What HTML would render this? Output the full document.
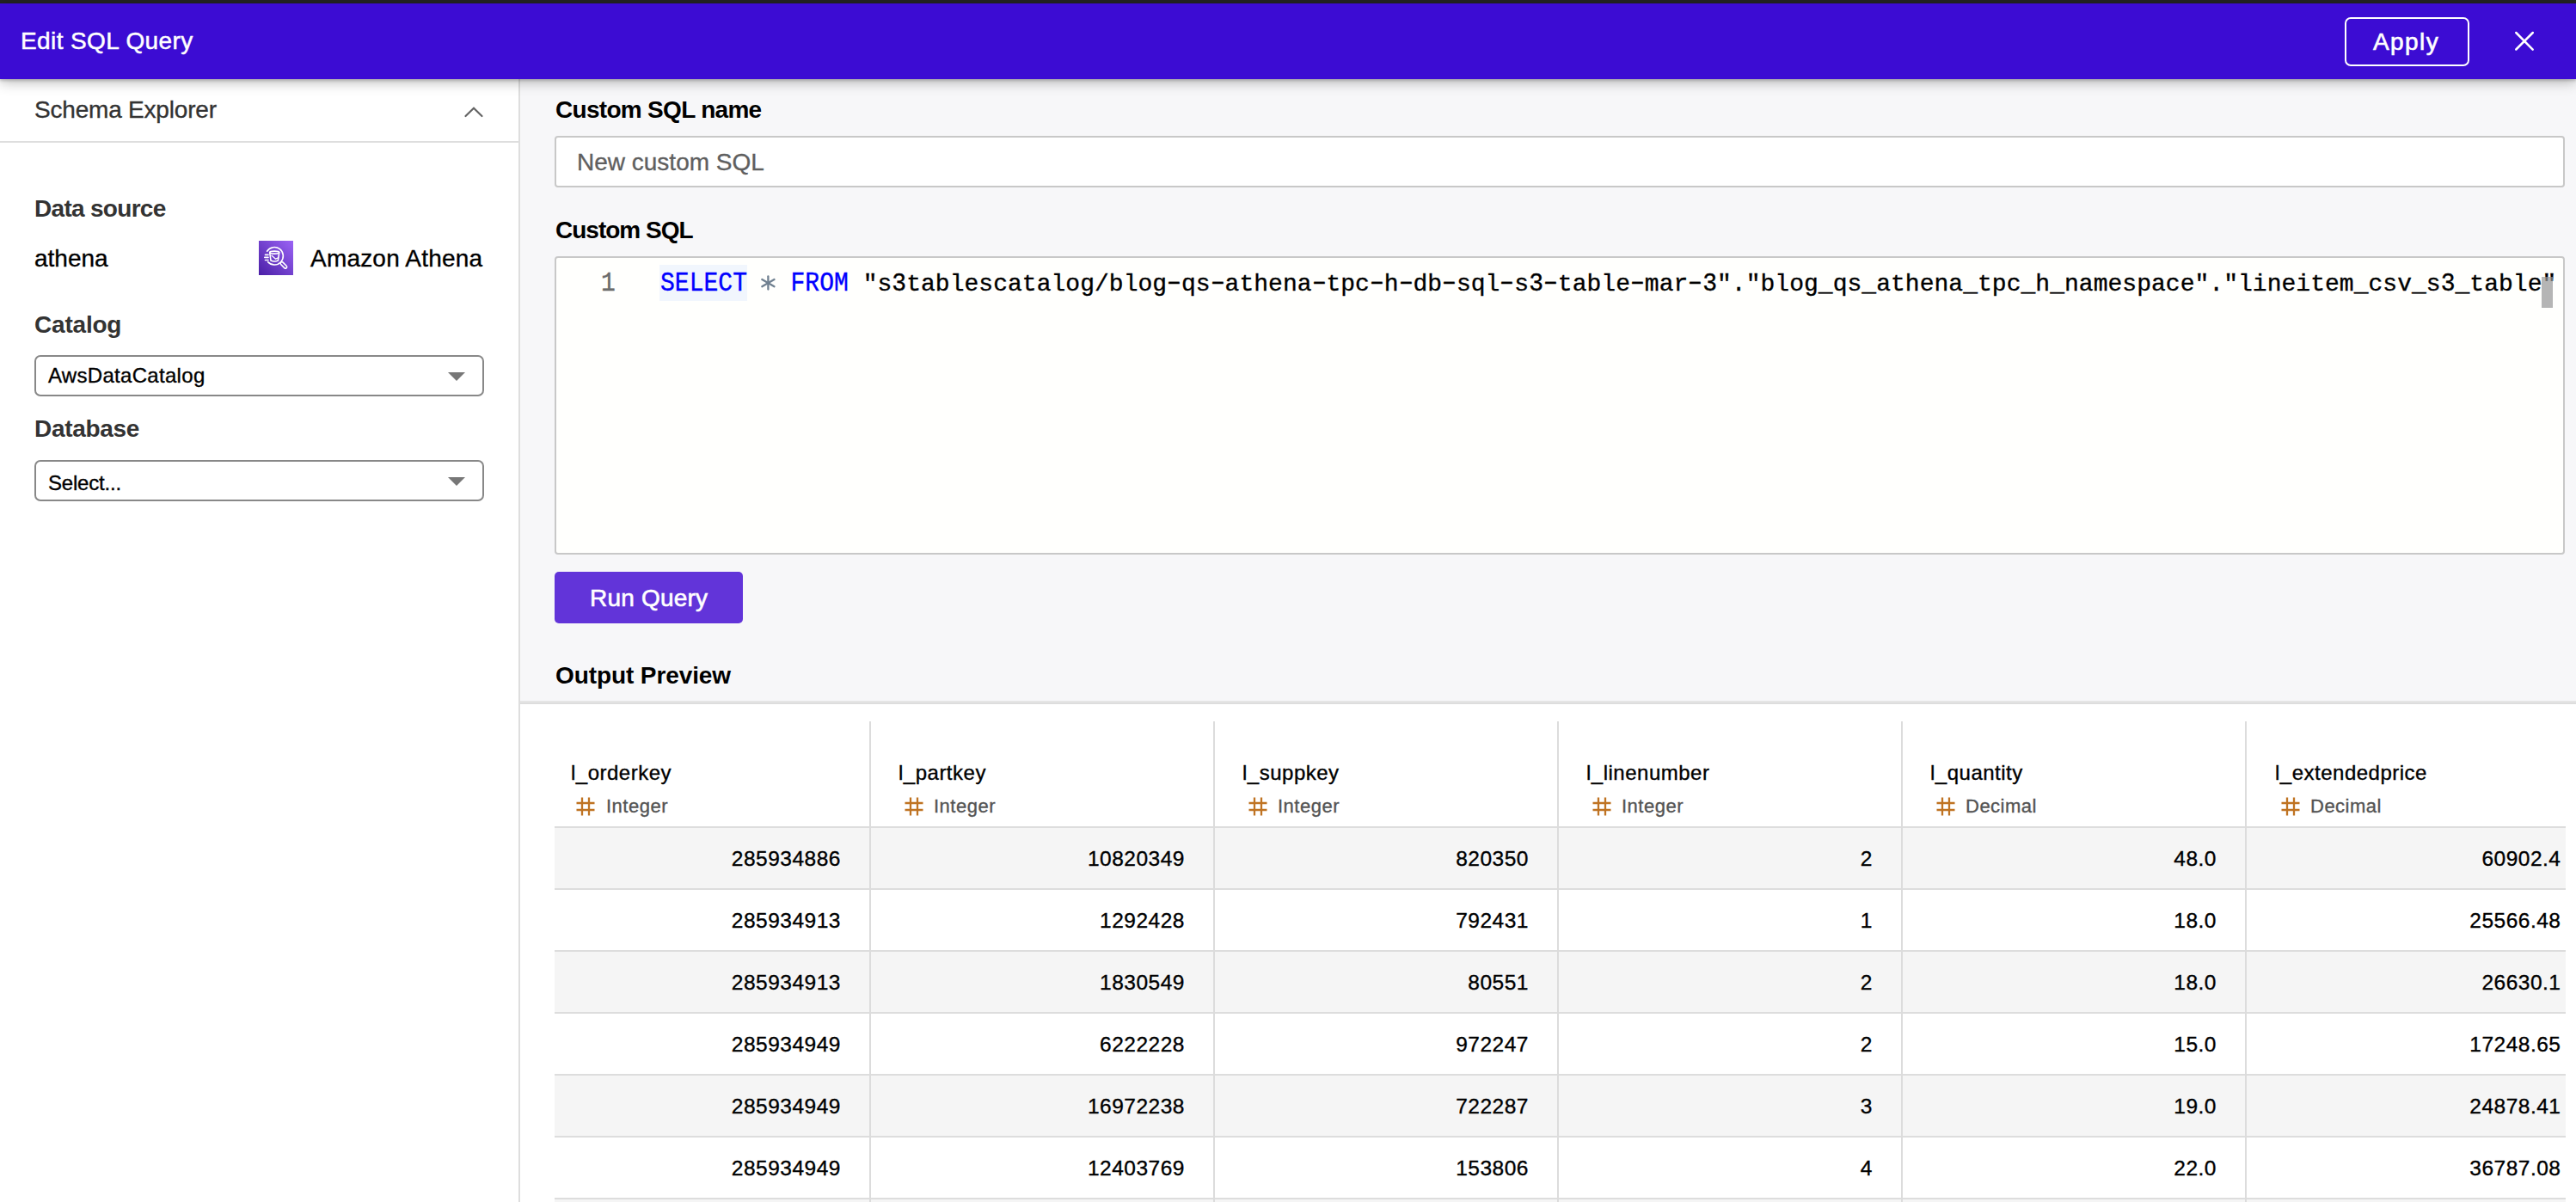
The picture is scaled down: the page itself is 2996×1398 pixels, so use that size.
<!DOCTYPE html>
<html><head><meta charset="utf-8">
<style>
*{box-sizing:border-box;margin:0;padding:0}
html,body{width:2996px;height:1398px;overflow:hidden;background:#fff;font-family:"Liberation Sans",sans-serif}
.a{position:absolute;white-space:nowrap}
.t{position:absolute;white-space:nowrap;line-height:0;-webkit-text-stroke:0.35px currentColor}
#topbar{left:0;top:0;width:2996px;height:4px;background:#232323}
#hdr{left:0;top:4px;width:2996px;height:88px;background:#3c0cd3;z-index:5;box-shadow:0 2px 3px rgba(0,0,0,0.18),0 4px 14px rgba(0,0,0,0.26)}
#left{left:0;top:92px;width:603px;height:1306px;background:#fff}
#lborder{left:603px;top:92px;width:2px;height:1306px;background:#dedede}
#right{left:605px;top:92px;width:2391px;height:726px;background:#f7f7f9}
.lbl{font-size:28px;font-weight:bold;color:#000;letter-spacing:-0.7px;-webkit-text-stroke:0}
.sel{position:absolute;left:40px;width:523px;height:48px;border:2px solid #888;border-radius:7px;background:#fff}
.tri{position:absolute;width:0;height:0;border-left:10px solid transparent;border-right:10px solid transparent;border-top:10px solid #777}
.box{position:absolute;border:2px solid #c8c8c8;border-radius:4px;background:#fff}
.mono{font-family:"Liberation Mono",monospace;white-space:pre}
.mono b{font-weight:normal;display:inline-block;line-height:0}
.mono .up{transform:scaleY(1.15);transform-origin:0 7.45px}
.mono .dg{transform:scaleY(1.08);transform-origin:0 7.45px}
.mono .hy{transform:translateY(-2.2px) scaleX(1.6);transform-origin:50% 0}
.hn{font-size:24px;color:#000;letter-spacing:0.5px}
.ty{font-size:22px;color:#545454;letter-spacing:0.5px}
.num{font-size:24.5px;color:#000;letter-spacing:0.5px}
.row{position:absolute;left:645px;width:2339px;height:72px}
.rb{position:absolute;left:645px;width:2339px;height:2px;background:#dddddd}
.cd{position:absolute;width:2px;background:#dcdcdc}
</style></head><body>
<div class="a" id="topbar"></div>
<div class="a" id="hdr">
  <div class="t" style="left:24px;top:44px;font-size:28px;color:#fff;letter-spacing:0.4px;-webkit-text-stroke:0.5px #fff">Edit SQL Query</div>
  <div class="a" style="left:2727px;top:16px;width:145px;height:57px;border:2px solid #fff;border-radius:7px"></div>
  <div class="t" style="left:2760px;top:45px;font-size:28px;color:#fff;letter-spacing:1.4px;-webkit-text-stroke:0.6px #fff">Apply</div>
  <svg class="a" style="left:2922px;top:26px" width="30" height="34" viewBox="0 0 30 34"><path d="M4.3 8 L23.7 27.6 M23.8 8 L4.3 27.5" stroke="#fff" stroke-width="2.5" stroke-linecap="round"/></svg>
</div>

<div class="a" id="left"></div>
<div class="a" id="lborder"></div>
<div class="a" id="right"></div>

<!-- left panel -->
<div class="t" style="left:40px;top:128px;font-size:28px;color:#333;letter-spacing:-0.2px">Schema Explorer</div>
<svg class="a" style="left:538px;top:121px" width="26" height="18" viewBox="0 0 26 18"><path d="M3.5 14 L13 4.8 L22.5 14" stroke="#636363" stroke-width="2.2" fill="none" stroke-linecap="round"/></svg>
<div class="a" style="left:0;top:164px;width:603px;height:2px;background:#dedede"></div>

<div class="t lbl" style="left:40px;top:243px;color:#333">Data source</div>
<div class="t" style="left:40px;top:301px;font-size:28px;color:#000">athena</div>
<svg class="a" style="left:301px;top:280px" width="40" height="40" viewBox="0 0 40 40">
  <defs><linearGradient id="ag" x1="0" y1="1" x2="1" y2="0"><stop offset="0" stop-color="#4a1fa6"/><stop offset="1" stop-color="#9b63f5"/></linearGradient></defs>
  <rect width="40" height="40" fill="url(#ag)"/>
  <g fill="none" stroke="#fff" stroke-width="1.6" stroke-linecap="round">
    <path d="M9.6 12.2 A10.2 10.2 0 1 1 10.6 24.6"/>
    <rect x="-1.7" y="-4.6" width="3.4" height="9.2" rx="1.7" transform="translate(28.9 28.4) rotate(-45)"/>
    <path d="M7.5 16.4 H11 M6.8 19.4 H11 M7.5 22.5 H11"/>
    <ellipse cx="18.2" cy="13.6" rx="5.5" ry="1.5"/>
    <path d="M12.7 13.6 L14 23 Q18.2 25 22.4 23 L23.7 13.6"/>
  </g>
  <path d="M14.6 16.8 L19.5 21.2 L23.2 19.5" fill="none" stroke="#fff" stroke-width="1.3"/>
</svg>
<div class="t" style="left:361px;top:301px;font-size:28px;color:#000;letter-spacing:0.2px">Amazon Athena</div>

<div class="t lbl" style="left:40px;top:378px;color:#333;letter-spacing:-0.2px">Catalog</div>
<div class="sel" style="top:413px"></div>
<div class="t" style="left:56px;top:437px;font-size:24px;color:#000;letter-spacing:0.3px">AwsDataCatalog</div>
<div class="tri" style="left:521px;top:433px"></div>

<div class="t lbl" style="left:40px;top:499px;color:#333;letter-spacing:-0.3px">Database</div>
<div class="sel" style="top:535px"></div>
<div class="t" style="left:56px;top:562px;font-size:24px;color:#000;letter-spacing:-0.2px">Select...</div>
<div class="tri" style="left:521px;top:555px"></div>

<!-- right panel -->
<div class="t lbl" style="left:646px;top:128px">Custom SQL name</div>
<div class="box" style="left:645px;top:158px;width:2338px;height:60px"></div>
<div class="t" style="left:671px;top:189px;font-size:28px;color:#5f5f5f">New custom SQL</div>

<div class="t lbl" style="left:646px;top:268px;letter-spacing:-1px">Custom SQL</div>
<div class="box" style="left:645px;top:298px;width:2338px;height:347px;background:#fffffd"></div>
<div class="a" style="left:767px;top:308px;width:102px;height:42px;background:#f1f6fd"></div>
<div class="t mono" style="left:699px;top:331px;font-size:28px;color:#6b6b6b;transform:scaleY(1.15);transform-origin:0 7.45px">1</div>
<svg class="a" style="left:883px;top:319px" width="20" height="20" viewBox="0 0 20 20"><g stroke="#708090" stroke-width="2.3" stroke-linecap="round"><path d="M10.4 2.5 V17.5"/><path d="M3.3 6 L17.5 14.2"/><path d="M3.3 14.2 L17.5 6"/></g></svg>
<div class="t mono" style="left:768px;top:331px;font-size:28px;color:#000;letter-spacing:0.03px"><b class="up" style="color:#0000ff">SELECT</b>   <b class="up" style="color:#0000ff">FROM</b> "s<b class="dg">3</b>tablescatalog/blog<b class="hy">-</b>qs<b class="hy">-</b>athena<b class="hy">-</b>tpc<b class="hy">-</b>h<b class="hy">-</b>db<b class="hy">-</b>sql<b class="hy">-</b>s<b class="dg">3</b><b class="hy">-</b>table<b class="hy">-</b>mar<b class="hy">-</b><b class="dg">3</b>"."blog_qs_athena_tpc_h_namespace"."lineitem_csv_s<b class="dg">3</b>_table"</div>
<div class="a" style="left:2956px;top:322px;width:13px;height:36px;background:rgba(150,150,150,0.7)"></div>

<div class="a" style="left:645px;top:665px;width:219px;height:60px;background:#6234d9;border-radius:5px"></div>
<div class="t" style="left:686px;top:696px;font-size:28px;color:#fff;-webkit-text-stroke:0.6px #fff;letter-spacing:0.2px">Run Query</div>

<div class="t lbl" style="left:646px;top:786px;letter-spacing:-0.1px">Output Preview</div>
<div class="a" style="left:605px;top:815px;width:2391px;height:4px;background:linear-gradient(#e5e5e5 50%,#dddddd 50%)"></div>

<!-- table -->
<!--TBL-->
<div class="row" style="top:962.00px;background:#f5f5f5"></div>
<div class="rb" style="top:961.00px"></div>
<div class="row" style="top:1034.05px;background:#fff"></div>
<div class="rb" style="top:1033.05px"></div>
<div class="row" style="top:1106.10px;background:#f5f5f5"></div>
<div class="rb" style="top:1105.10px"></div>
<div class="row" style="top:1178.15px;background:#fff"></div>
<div class="rb" style="top:1177.15px"></div>
<div class="row" style="top:1250.20px;background:#f5f5f5"></div>
<div class="rb" style="top:1249.20px"></div>
<div class="row" style="top:1322.25px;background:#fff"></div>
<div class="rb" style="top:1321.25px"></div>
<div class="row" style="top:1394.30px;background:#f5f5f5"></div>
<div class="rb" style="top:1393.30px"></div>
<div class="cd" style="left:1011px;top:839px;height:600px"></div>
<div class="cd" style="left:1411px;top:839px;height:600px"></div>
<div class="cd" style="left:1811px;top:839px;height:600px"></div>
<div class="cd" style="left:2211px;top:839px;height:600px"></div>
<div class="cd" style="left:2611px;top:839px;height:600px"></div>
<div class="t hn" style="left:664px;top:899.18px">l_orderkey</div>
<svg class="a" style="left:670px;top:927px" width="22" height="22" viewBox="0 0 22 22"><path d="M7 0.5 V21.5 M15 0.5 V21.5 M0.5 7 H21.5 M0.5 15 H21.5" stroke="#bf7322" stroke-width="2.3"/></svg>
<div class="t ty" style="left:705px;top:938.08px">Integer</div>
<div class="t hn" style="left:1045px;top:899.18px">l_partkey</div>
<svg class="a" style="left:1052.3px;top:927px" width="22" height="22" viewBox="0 0 22 22"><path d="M7 0.5 V21.5 M15 0.5 V21.5 M0.5 7 H21.5 M0.5 15 H21.5" stroke="#bf7322" stroke-width="2.3"/></svg>
<div class="t ty" style="left:1086px;top:938.08px">Integer</div>
<div class="t hn" style="left:1445px;top:899.18px">l_suppkey</div>
<svg class="a" style="left:1452.3px;top:927px" width="22" height="22" viewBox="0 0 22 22"><path d="M7 0.5 V21.5 M15 0.5 V21.5 M0.5 7 H21.5 M0.5 15 H21.5" stroke="#bf7322" stroke-width="2.3"/></svg>
<div class="t ty" style="left:1486px;top:938.08px">Integer</div>
<div class="t hn" style="left:1845px;top:899.18px">l_linenumber</div>
<svg class="a" style="left:1852.3px;top:927px" width="22" height="22" viewBox="0 0 22 22"><path d="M7 0.5 V21.5 M15 0.5 V21.5 M0.5 7 H21.5 M0.5 15 H21.5" stroke="#bf7322" stroke-width="2.3"/></svg>
<div class="t ty" style="left:1886px;top:938.08px">Integer</div>
<div class="t hn" style="left:2245px;top:899.18px">l_quantity</div>
<svg class="a" style="left:2252.3px;top:927px" width="22" height="22" viewBox="0 0 22 22"><path d="M7 0.5 V21.5 M15 0.5 V21.5 M0.5 7 H21.5 M0.5 15 H21.5" stroke="#bf7322" stroke-width="2.3"/></svg>
<div class="t ty" style="left:2286px;top:938.08px">Decimal</div>
<div class="t hn" style="left:2646px;top:899.18px">l_extendedprice</div>
<svg class="a" style="left:2653.3px;top:927px" width="22" height="22" viewBox="0 0 22 22"><path d="M7 0.5 V21.5 M15 0.5 V21.5 M0.5 7 H21.5 M0.5 15 H21.5" stroke="#bf7322" stroke-width="2.3"/></svg>
<div class="t ty" style="left:2687px;top:938.08px">Decimal</div>
<div class="t num" style="right:2018px;top:998.51px">285934886</div>
<div class="t num" style="right:1618px;top:998.51px">10820349</div>
<div class="t num" style="right:1218px;top:998.51px">820350</div>
<div class="t num" style="right:818px;top:998.51px">2</div>
<div class="t num" style="right:418px;top:998.51px">48.0</div>
<div class="t num" style="right:17.5px;top:998.51px">60902.4</div>
<div class="t num" style="right:2018px;top:1070.56px">285934913</div>
<div class="t num" style="right:1618px;top:1070.56px">1292428</div>
<div class="t num" style="right:1218px;top:1070.56px">792431</div>
<div class="t num" style="right:818px;top:1070.56px">1</div>
<div class="t num" style="right:418px;top:1070.56px">18.0</div>
<div class="t num" style="right:17.5px;top:1070.56px">25566.48</div>
<div class="t num" style="right:2018px;top:1142.61px">285934913</div>
<div class="t num" style="right:1618px;top:1142.61px">1830549</div>
<div class="t num" style="right:1218px;top:1142.61px">80551</div>
<div class="t num" style="right:818px;top:1142.61px">2</div>
<div class="t num" style="right:418px;top:1142.61px">18.0</div>
<div class="t num" style="right:17.5px;top:1142.61px">26630.1</div>
<div class="t num" style="right:2018px;top:1214.66px">285934949</div>
<div class="t num" style="right:1618px;top:1214.66px">6222228</div>
<div class="t num" style="right:1218px;top:1214.66px">972247</div>
<div class="t num" style="right:818px;top:1214.66px">2</div>
<div class="t num" style="right:418px;top:1214.66px">15.0</div>
<div class="t num" style="right:17.5px;top:1214.66px">17248.65</div>
<div class="t num" style="right:2018px;top:1286.71px">285934949</div>
<div class="t num" style="right:1618px;top:1286.71px">16972238</div>
<div class="t num" style="right:1218px;top:1286.71px">722287</div>
<div class="t num" style="right:818px;top:1286.71px">3</div>
<div class="t num" style="right:418px;top:1286.71px">19.0</div>
<div class="t num" style="right:17.5px;top:1286.71px">24878.41</div>
<div class="t num" style="right:2018px;top:1358.76px">285934949</div>
<div class="t num" style="right:1618px;top:1358.76px">12403769</div>
<div class="t num" style="right:1218px;top:1358.76px">153806</div>
<div class="t num" style="right:818px;top:1358.76px">4</div>
<div class="t num" style="right:418px;top:1358.76px">22.0</div>
<div class="t num" style="right:17.5px;top:1358.76px">36787.08</div>
<div class="t num" style="right:2018px;top:1430.81px">285934949</div>
<div class="t num" style="right:1618px;top:1430.81px">12403769</div>
<div class="t num" style="right:1218px;top:1430.81px">153806</div>
<div class="t num" style="right:818px;top:1430.81px">5</div>
<div class="t num" style="right:418px;top:1430.81px">22.0</div>
<div class="t num" style="right:17.5px;top:1430.81px">36787.08</div>
<!--/TBL-->
</body></html>
